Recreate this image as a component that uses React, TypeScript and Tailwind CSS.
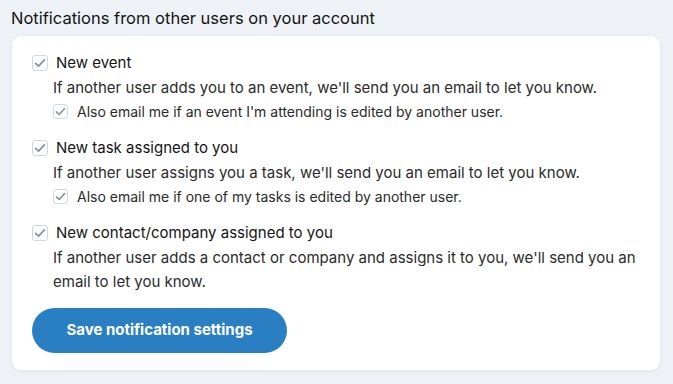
import React from "react";

function Check({ size = 16 }: { size?: number }) {
  return (
    <span
      className="flex shrink-0 items-center justify-center rounded-[3px] border border-[#d0d7df] bg-white"
      style={{ width: size, height: size }}
    >
      <svg width={size - 2} height={size - 2} viewBox="0 0 14 14" fill="none">
        <path d="M2.6 7.4 L5.6 10.2 L11.4 3.8" stroke="#8696a7" strokeWidth="1.8" strokeLinecap="round" strokeLinejoin="round" />
      </svg>
    </span>
  );
}

function Group({ title, desc, sub }: { title: string; desc: string; sub?: string }) {
  return (
    <div className="flex flex-col">
      <label className="flex h-[24px] items-center gap-[8px] text-[15px] text-[#141414]">
        <Check size={16} />
        <span>{title}</span>
      </label>
      <p className="ml-[21px] mt-[1px] text-[15px] leading-[24px] text-[#2b2b2b]">{desc}</p>
      {sub && (
        <label className="ml-[21px] flex h-[22px] items-center gap-[9px] text-[14px] text-[#2b2b2b]">
          <Check size={15} />
          <span>{sub}</span>
        </label>
      )}
    </div>
  );
}

export default function App() {
  return (
    <div
      className="h-[384px] w-[673px] bg-[#eef2f6] pl-[12px] pr-[13px] pt-[6px]"
      style={{ fontFamily: "Inter, 'Noto Sans', sans-serif" }}
    >
      <h2 className="-ml-[1px] h-[26px] text-[16.5px] leading-[24px] text-[#141414]">
        Notifications from other users on your account
      </h2>
      <div className="mt-[4px] flex flex-col gap-[14px] rounded-[9px] bg-white pb-[17px] pl-[20px] pr-[20px] pt-[15px] shadow-[0_1px_4px_rgba(30,50,80,0.08)]">
        <Group
          title="New event"
          desc="If another user adds you to an event, we'll send you an email to let you know."
          sub="Also email me if an event I'm attending is edited by another user."
        />
        <Group
          title="New task assigned to you"
          desc="If another user assigns you a task, we'll send you an email to let you know."
          sub="Also email me if one of my tasks is edited by another user."
        />
        <Group
          title="New contact/company assigned to you"
          desc="If another user adds a contact or company and assigns it to you, we'll send you an email to let you know."
        />
        <button className="h-[45px] w-[255px] rounded-full bg-[#2a7fc2] text-[15px] font-bold text-white">
          Save notification settings
        </button>
      </div>
    </div>
  );
}
